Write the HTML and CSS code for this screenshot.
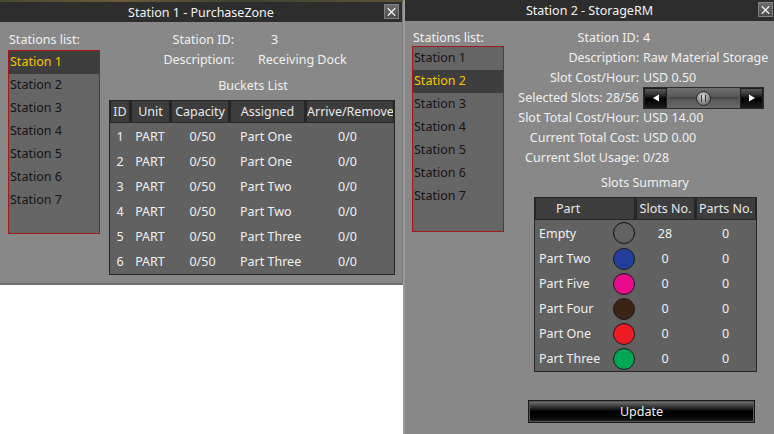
FILE: index.html
```html
<!DOCTYPE html>
<html>
<head>
<meta charset="utf-8">
<link rel="stylesheet" href="styles.css">
</head>
<body>
<div class="page">
  <div class="scene">
    <div class="win win1">
      <div class="titlebar">
        <span class="title">Station 1 - PurchaseZone</span>
        <span class="close"><svg width="14" height="14" viewBox="0 0 14 14"><path d="M3 3 L11 11 M11 3 L3 11" stroke="#e8e8e8" stroke-width="1.6"/></svg></span>
      </div>
      <div class="body1">
        <div class="listcol">
          <div class="listlabel">Stations list:</div>
          <div class="listbox">
            <div class="item sel">Station 1</div>
            <div class="item">Station 2</div>
            <div class="item">Station 3</div>
            <div class="item">Station 4</div>
            <div class="item">Station 5</div>
            <div class="item">Station 6</div>
            <div class="item">Station 7</div>
          </div>
        </div>
        <div class="maincol1">
          <div class="inforow"><span class="lbl1">Station ID:</span><span class="val1 v-id">3</span></div>
          <div class="inforow"><span class="lbl1">Description:</span><span class="val1 v-desc">Receiving Dock</span></div>
          <div class="subtitle1">Buckets List</div>
          <table class="grid buckets">
            <thead>
              <tr><th class="c-id">ID</th><th class="c-unit">Unit</th><th class="c-cap">Capacity</th><th class="c-asg">Assigned</th><th class="c-arr">Arrive/Remove</th></tr>
            </thead>
            <tbody>
              <tr><td>1</td><td>PART</td><td class="cap">0/50</td><td class="asg">Part One</td><td class="arr">0/0</td></tr>
              <tr><td>2</td><td>PART</td><td class="cap">0/50</td><td class="asg">Part One</td><td class="arr">0/0</td></tr>
              <tr><td>3</td><td>PART</td><td class="cap">0/50</td><td class="asg">Part Two</td><td class="arr">0/0</td></tr>
              <tr><td>4</td><td>PART</td><td class="cap">0/50</td><td class="asg">Part Two</td><td class="arr">0/0</td></tr>
              <tr><td>5</td><td>PART</td><td class="cap">0/50</td><td class="asg">Part Three</td><td class="arr">0/0</td></tr>
              <tr><td>6</td><td>PART</td><td class="cap">0/50</td><td class="asg">Part Three</td><td class="arr">0/0</td></tr>
            </tbody>
          </table>
        </div>
      </div>
    </div>
  </div>

  <div class="win win2">
    <div class="titlebar">
      <span class="title">Station 2 - StorageRM</span>
      <span class="close"><svg width="14" height="14" viewBox="0 0 14 14"><path d="M3 3 L11 11 M11 3 L3 11" stroke="#e8e8e8" stroke-width="1.6"/></svg></span>
    </div>
    <div class="body2">
      <div class="listcol2">
        <div class="listlabel">Stations list:</div>
        <div class="listbox listbox2">
          <div class="item">Station 1</div>
          <div class="item sel">Station 2</div>
          <div class="item">Station 3</div>
          <div class="item">Station 4</div>
          <div class="item">Station 5</div>
          <div class="item">Station 6</div>
          <div class="item">Station 7</div>
        </div>
      </div>
      <div class="maincol2">
        <div class="info2">
          <span class="lbl2">Station ID:</span><span class="val2">4</span>
          <span class="lbl2">Description:</span><span class="val2">Raw Material Storage</span>
          <span class="lbl2">Slot Cost/Hour:</span><span class="val2">USD 0.50</span>
          <span class="lbl2">Selected Slots: 28/56</span>
          <span class="val2">
            <span class="slider">
              <span class="sbtn"><svg width="10" height="10" viewBox="0 0 10 10"><path d="M2 5 L8 1.5 L8 8.5 Z" fill="#fff"/></svg></span>
              <span class="track"><span class="thumb"></span></span>
              <span class="sbtn"><svg width="10" height="10" viewBox="0 0 10 10"><path d="M8 5 L2 1.5 L2 8.5 Z" fill="#fff"/></svg></span>
            </span>
          </span>
          <span class="lbl2">Slot Total Cost/Hour:</span><span class="val2">USD 14.00</span>
          <span class="lbl2">Current Total Cost:</span><span class="val2">USD 0.00</span>
          <span class="lbl2">Current Slot Usage:</span><span class="val2">0/28</span>
        </div>
        <div class="subtitle2">Slots Summary</div>
        <table class="grid slots">
          <thead>
            <tr><th class="c-part">Part</th><th class="c-sn">Slots No.</th><th class="c-pn">Parts No.</th></tr>
          </thead>
          <tbody>
            <tr><td class="pname"><span>Empty</span><span class="dot empty"></span></td><td>28</td><td>0</td></tr>
            <tr><td class="pname"><span>Part Two</span><span class="dot blue"></span></td><td>0</td><td>0</td></tr>
            <tr><td class="pname"><span>Part Five</span><span class="dot pink"></span></td><td>0</td><td>0</td></tr>
            <tr><td class="pname"><span>Part Four</span><span class="dot brown"></span></td><td>0</td><td>0</td></tr>
            <tr><td class="pname"><span>Part One</span><span class="dot red"></span></td><td>0</td><td>0</td></tr>
            <tr><td class="pname"><span>Part Three</span><span class="dot green"></span></td><td>0</td><td>0</td></tr>
          </tbody>
        </table>
        <div class="btnrow"><button class="update">Update</button></div>
      </div>
    </div>
  </div>
</div>
</body>
</html>
```

FILE: styles.css
```css
* { box-sizing: border-box; }
html, body { margin: 0; padding: 0; background: #ffffff; }
body {
  width: 774px; height: 434px; overflow: hidden;
  font-family: "Noto Sans", "Open Sans", sans-serif;
  font-size: 12.5px;
  color: #f0f0f0;
}
.page { display: flex; align-items: flex-start; }

.scene {
  width: 403px;
  padding-top: 2px;
  background: linear-gradient(90deg, #4a4a2e 0%, #6b5a38 30%, #3e4230 60%, #5d5435 100%);
}
.win { background: #888888; }
.win1 { width: 403px; height: 283px; border-bottom: 2px solid #6e6e6e; border-right: 1px solid #7a7a7a; }
.win2 { width: 371px; height: 434px; border-left: 2px solid #9a9a9a; }

.titlebar {
  height: 21px;
  background: #2d2d2d;
  display: flex; align-items: center; justify-content: center;
  position: relative;
  font-size: 12.5px;
  color: #f2f2f2;
}
.win1 .titlebar { height: 20px; }
.close {
  position: absolute; top: 2px; right: 3px;
  width: 15px; height: 15px;
  background: linear-gradient(#6c6c6c, #4a4a4a);
  border: 1px solid #808080;
  display: flex; align-items: center; justify-content: center;
}
.win2 .close { right: 1px; top: 2px; }

.body1 { display: flex; padding: 10px 0 0 8px; gap: 9px; }
.listlabel { height: 18px; line-height: 16px; padding-left: 1px; }
.listbox {
  width: 92px; height: 184px;
  background: #656565;
  border: 1px solid #a31818;
}
.listbox2 { height: 186px; margin-top: -2px; }
.item { height: 23px; line-height: 22px; color: #151515; padding-left: 1px; }
.item.sel { background: #3e3e3e; color: #f7c600; }

.maincol1 { width: 284px; }
.inforow { display: flex; height: 20px; line-height: 16px; }
.lbl1 { width: 125px; text-align: right; }
.v-id { padding-left: 37px; }
.v-desc { padding-left: 24px; }
.subtitle1 { text-align: center; height: 20px; line-height: 16px; margin-top: 6px; margin-bottom: 2px; padding-left: 4px; }

.grid {
  border-collapse: separate; border-spacing: 0;
  background: #616161;
  border: 1px solid #262626;
  table-layout: fixed;
}
.grid th {
  background: #3d3d3d;
  font-weight: normal;
  color: #e8e8e8;
  border: 1px solid #262626;
  border-top: 0;
  height: 22px;
  padding: 0;
  white-space: nowrap;
  overflow: hidden;
}
.grid th + th { border-left: 2px solid #262626; }
.grid td { padding: 0; text-align: center; white-space: nowrap; }

.buckets { width: 284px; }
.buckets thead tr th { border-bottom: 1px solid #262626; }
.buckets td { height: 25px; line-height: 25px; }
.buckets tbody tr:first-child td { padding-top: 1px; }
.c-id { width: 20px; }
.c-unit { width: 40px; }
.c-cap { width: 59px; }
.c-asg { width: 76px; }
.c-arr { width: 89px; }
.buckets td.cap { padding-left: 6px; }
.buckets td.asg { text-align: left; padding-left: 11px; }
.buckets td.arr { padding-right: 4px; }

.body2 { display: flex; padding: 9px 0 0 7px; gap: 5px; }
.listcol2 { width: 94px; }
.maincol2 { width: 260px; }
.info2 {
  display: grid;
  grid-template-columns: 128px 1fr;
  column-gap: 4px;
  grid-auto-rows: 20px;
  line-height: 20px;
  margin-top: -2px;
}
.lbl2 { text-align: right; white-space: nowrap; }
.val2 { white-space: nowrap; }
.slider {
  display: flex; width: 121px; height: 22px; margin-top: -1px;
  border: 1px solid #2a2a2a;
}
.sbtn {
  width: 23px; height: 20px;
  background: linear-gradient(#5a5a5a 0%, #2a2a2a 35%, #000 55%, #1a1a1a 100%);
  border: 1px solid #1e1e1e;
  display: flex; align-items: center; justify-content: center;
}
.track {
  flex: 1;
  background: linear-gradient(#6e6e6e, #555 50%, #6a6a6a);
  display: flex; align-items: center; justify-content: center;
  position: relative;
}
.track::before {
  content: ""; position: absolute; left: 2px; right: 2px; top: 9px; height: 2px;
  background: #474747;
}
.thumb {
  position: relative;
  width: 15px; height: 15px; border-radius: 50%;
  background: radial-gradient(circle at 45% 35%, #d8d8d8, #7a7a7a 70%, #3a3a3a);
  border: 1px solid #2a2a2a;
}
.thumb::after {
  content: ""; position: absolute; left: 4px; top: 3px; width: 3px; height: 7px;
  border-left: 1.5px solid #333; border-right: 1.5px solid #333;
}

.subtitle2 { text-align: center; height: 20px; line-height: 20px; margin-top: 5px; padding-left: 8px; }
.slots { width: 221px; margin-left: 23px; margin-top: 4px; }
.slots thead tr th { border-bottom: 1px solid #262626; }
.c-part { width: 100px; text-align: left; padding-left: 20px !important; }
.c-sn { width: 60px; }
.c-pn { width: 61px; }
.slots td { height: 25px; line-height: 25px; }
.slots tbody tr:first-child td { padding-top: 1px; }
.slots td.pname {
  text-align: left; padding-left: 4px;
  display: flex; align-items: center; justify-content: space-between;
  padding-right: 0;
}
.dot {
  display: inline-block; width: 22px; height: 22px; border-radius: 50%;
  border: 1px solid #1a1a1a;
}
.dot.empty { background: transparent; border: 1.5px solid #111; }
.dot.blue { background: #213f9a; }
.dot.pink { background: #ea0a8c; }
.dot.brown { background: #3c2415; }
.dot.red { background: #ed1c24; }
.dot.green { background: #00a651; }

.btnrow { margin-top: 28px; padding-left: 17px; }
.update {
  width: 227px; height: 23px;
  font-family: inherit; font-size: 12.5px; color: #f2f2f2;
  background: linear-gradient(#7a7a7a 0%, #3a3a3a 25%, #000 50%, #050505 80%, #2a2a2a 100%);
  border: 1px solid #1a1a1a;
  box-shadow: inset 0 0 0 1px #555;
  padding: 0;
}
```
